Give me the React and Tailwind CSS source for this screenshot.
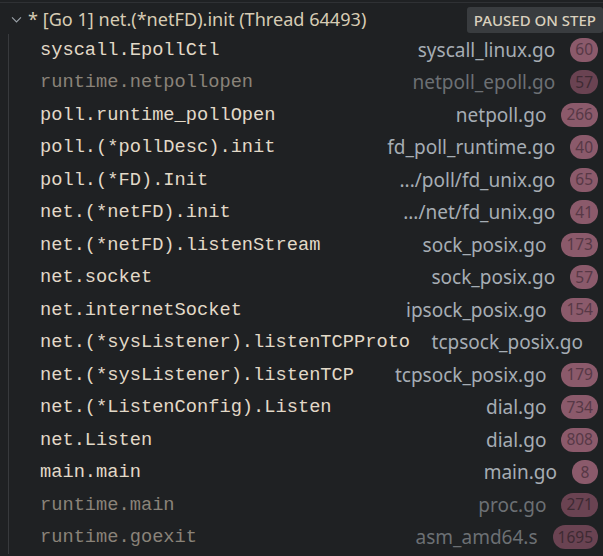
import React from "react";

const frames = [
  { name: "syscall.EpollCtl", file: "syscall_linux.go", line: "60" },
  { name: "runtime.netpollopen", file: "netpoll_epoll.go", line: "57", dim: true },
  { name: "poll.runtime_pollOpen", file: "netpoll.go", line: "266" },
  { name: "poll.(*pollDesc).init", file: "fd_poll_runtime.go", line: "40" },
  { name: "poll.(*FD).Init", file: ".../poll/fd_unix.go", line: "65" },
  { name: "net.(*netFD).init", file: ".../net/fd_unix.go", line: "41" },
  { name: "net.(*netFD).listenStream", file: "sock_posix.go", line: "173" },
  { name: "net.socket", file: "sock_posix.go", line: "57" },
  { name: "net.internetSocket", file: "ipsock_posix.go", line: "154" },
  { name: "net.(*sysListener).listenTCPProto", file: "tcpsock_posix.go" },
  { name: "net.(*sysListener).listenTCP", file: "tcpsock_posix.go", line: "179" },
  { name: "net.(*ListenConfig).Listen", file: "dial.go", line: "734" },
  { name: "net.Listen", file: "dial.go", line: "808" },
  { name: "main.main", file: "main.go", line: "8" },
  { name: "runtime.main", file: "proc.go", line: "271", dim: true },
  { name: "runtime.goexit", file: "asm_amd64.s", line: "1695", dim: true },
];

const sans = { fontFamily: '"Noto Sans", sans-serif' };

const Frame = ({ frame }) => (
  <div
    className={
      "flex items-center h-[32.5px] pl-[31px] " +
      (frame.line ? "pr-[5px]" : "pr-[20px]")
    }
  >
    <span
      className={
        "shrink-0 whitespace-pre font-['Liberation_Mono',monospace] text-[18.7px] " +
        (frame.dim ? "text-[#8a8379]" : "text-[#e2d9c8]")
      }
    >
      {frame.name}
    </span>
    <span className="flex-1" />
    <span
      className={
        "whitespace-nowrap text-[19px] pl-[6px] " +
        (frame.dim ? "text-[#6c7074]" : "text-[#a6adb4]")
      }
      style={sans}
    >
      {frame.file}
    </span>
    {frame.line && (
      <span
        className={
          "ml-[15px] h-[24px] min-w-[26px] px-[5px] rounded-full flex items-center justify-center text-[15.5px] " +
          (frame.dim
            ? "bg-[#6a4352] text-[#3e2a33]"
            : "bg-[#8b5a6b] text-[#573846]")
        }
        style={sans}
      >
        {frame.line}
      </span>
    )}
  </div>
);

const App = () => {
  return (
    <div className="w-[603px] h-[556px] bg-[#1f2123] overflow-hidden pt-[2px]">
      <div className="border-t border-[#2f3134]">
        {/* thread header */}
        <div className="flex items-center h-[30.5px] pt-[3px] pl-[10px] pr-[0px]">
          <svg width="13" height="13" viewBox="0 0 16 16" className="shrink-0">
            <path
              d="M2.5 5.5 L8 11 L13.5 5.5"
              fill="none"
              stroke="#9aa1a8"
              strokeWidth="1.4"
            />
          </svg>
          <span
            className="ml-[5px] text-[18.1px] text-[#d7ccb4] whitespace-nowrap"
            style={sans}
          >
            * [Go 1] net.(*netFD).init (Thread 64493)
          </span>
          <span
            className="ml-auto shrink-0 h-[26px] px-[7px] rounded-[3px] bg-[#393c3f] text-[#d9d0bd] text-[15px] font-medium flex items-center"
            style={sans}
          >
            PAUSED ON STEP
          </span>
        </div>

        {/* stack frames, with the tree's indent guide */}
        <div className="ml-[8px] border-l border-[#383a3d]">
          {frames.map((f, i) => (
            <Frame frame={f} key={i} />
          ))}
        </div>
      </div>
    </div>
  );
};

export default App;
